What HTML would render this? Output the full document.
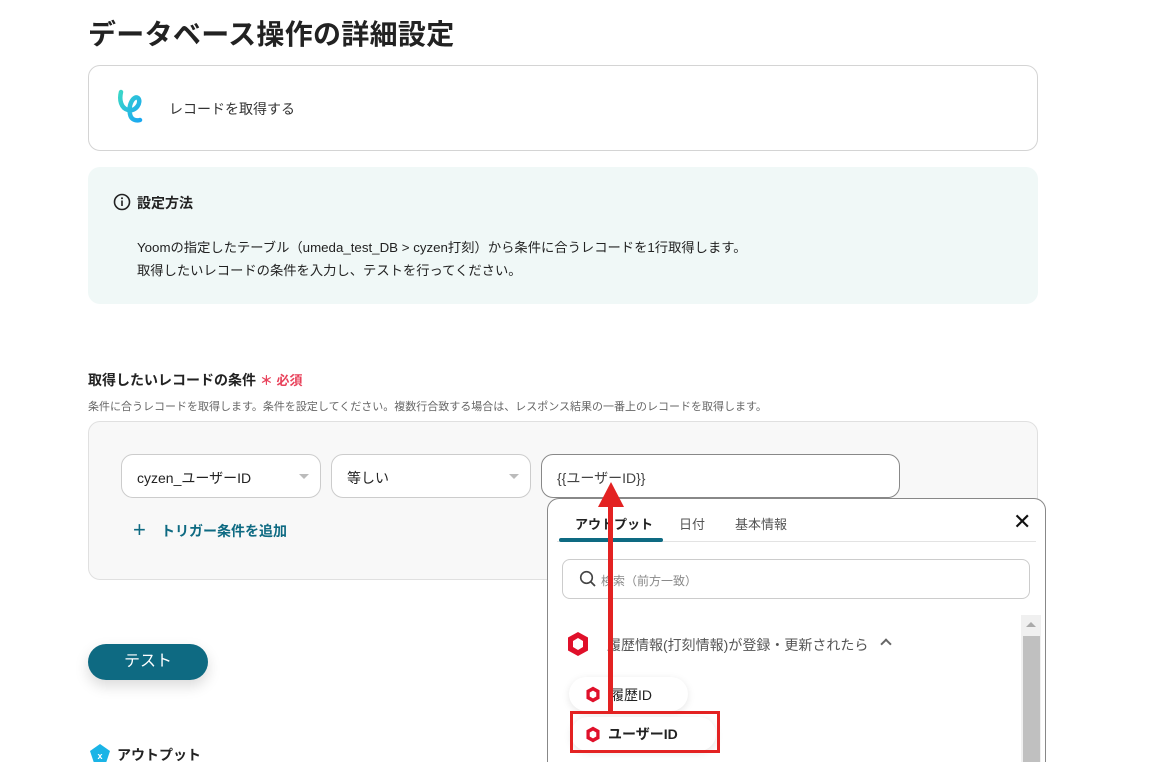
<!DOCTYPE html>
<html><head><meta charset="utf-8"><style>
*{box-sizing:border-box;margin:0;padding:0}
html,body{width:1168px;height:762px;overflow:hidden}
body{background:#fff;font-family:"Liberation Sans","Noto Sans CJK JP",sans-serif;color:#222;position:relative}
.a{position:absolute}
</style></head><body>
<div class="a" style="left:88px;top:13px;font-size:28px;font-weight:bold;color:#222;letter-spacing:0.3px">データベース操作の詳細設定</div>
<div class="a" style="left:88px;top:65px;width:950px;height:86px;border:1px solid #d4d4d4;border-radius:12px"></div>
<svg class="a" style="left:116px;top:88px" width="34" height="40" viewBox="0 0 34 40"><defs><linearGradient id="g" x1="0" y1="0" x2="1" y2="1"><stop offset="0" stop-color="#3ad6c8"/><stop offset="1" stop-color="#1aa8f0"/></linearGradient></defs><path d="M5 4 C3 12 5 20 12 22 C20 24 26 14 22 10 C18 7 12 16 14 26 C15 32 20 33 24 32" fill="none" stroke="url(#g)" stroke-width="4.5" stroke-linecap="round"/></svg>
<div class="a" style="left:169px;top:99px;font-size:14px;color:#333">レコードを取得する</div>
<div class="a" style="left:88px;top:167px;width:950px;height:137px;background:#f0f8f7;border-radius:12px"></div>
<svg class="a" style="left:113px;top:193px" width="18" height="18" viewBox="0 0 18 18"><circle cx="9" cy="9" r="7.5" fill="none" stroke="#222" stroke-width="1.6"/><rect x="8.2" y="7.5" width="1.6" height="5.5" fill="#222"/><circle cx="9" cy="5.3" r="1" fill="#222"/></svg>
<div class="a" style="left:137px;top:193px;font-size:14px;font-weight:bold">設定方法</div>
<div class="a" style="left:137px;top:236px;font-size:13.3px;line-height:23px;color:#222">Yoomの指定したテーブル（umeda_test_DB &gt; cyzen打刻）から条件に合うレコードを1行取得します。<br>取得したいレコードの条件を入力し、テストを行ってください。</div>
<div class="a" style="left:88px;top:370px;font-size:14px;font-weight:bold">取得したいレコードの条件 <span style="color:#e8415a;font-size:13px">＊ 必須</span></div>
<div class="a" style="left:88px;top:398px;font-size:11px;color:#666">条件に合うレコードを取得します。条件を設定してください。複数行合致する場合は、レスポンス結果の一番上のレコードを取得します。</div>
<div class="a" style="left:88px;top:421px;width:950px;height:159px;background:#f8f8f8;border:1px solid #e0e0e0;border-radius:12px"></div>
<div class="a" style="left:121px;top:454px;width:200px;height:44px;background:#fff;border:1px solid #ccc;border-radius:12px;padding:13px 0 0 15px;font-size:14px">cyzen_ユーザーID</div>
<div class="a" style="left:299px;top:474px;border:5px solid transparent;border-top:5px solid #bbb;border-bottom:0"></div>
<div class="a" style="left:331px;top:454px;width:200px;height:44px;background:#fff;border:1px solid #ccc;border-radius:12px;padding:13px 0 0 15px;font-size:14px">等しい</div>
<div class="a" style="left:509px;top:474px;border:5px solid transparent;border-top:5px solid #bbb;border-bottom:0"></div>
<div class="a" style="left:541px;top:454px;width:359px;height:44px;background:#fff;border:1px solid #888;border-radius:12px;padding:13px 0 0 15px;font-size:14px;color:#444">{{ユーザーID}}</div>
<div class="a" style="left:133px;top:517px;font-size:22px;color:#0e6a82">+</div>
<div class="a" style="left:161px;top:521px;font-size:14px;font-weight:bold;color:#0e6a82">トリガー条件を追加</div>
<div class="a" style="left:88px;top:644px;width:120px;height:36px;background:#0e6a82;border-radius:18px;color:#fff;font-size:16px;text-align:center;line-height:36px;box-shadow:0 6px 14px rgba(0,0,0,.15)">テスト</div>
<svg class="a" style="left:90px;top:744px" width="20" height="19" viewBox="0 0 20 19"><path d="M10 0 L20 7 L16 19 L4 19 L0 7Z" fill="#1ab4e6"/><text x="10" y="15" font-size="9" font-weight="bold" fill="#fff" text-anchor="middle" font-family="Liberation Sans">x</text></svg>
<div class="a" style="left:117px;top:745px;font-size:14px;font-weight:bold">アウトプット</div>
<!-- popup -->
<div class="a" style="left:547px;top:498px;width:499px;height:264px;background:#fff;border:1px solid #888;border-bottom:none;border-radius:12px 12px 0 0"></div>
<div class="a" style="left:575px;top:514px;font-size:13px;font-weight:bold">アウトプット</div>
<div class="a" style="left:679px;top:514px;font-size:13px;color:#555">日付</div>
<div class="a" style="left:735px;top:514px;font-size:13px;color:#555">基本情報</div>
<div class="a" style="left:1013px;top:509px;font-size:22px;color:#111">✕</div>
<div class="a" style="left:557px;top:541px;width:479px;height:1px;background:#e3e3e3"></div>
<div class="a" style="left:559px;top:538px;width:104px;height:4px;background:#0e6a82;border-radius:2px"></div>
<div class="a" style="left:562px;top:559px;width:468px;height:40px;border:1px solid #ccc;border-radius:8px"></div>
<svg class="a" style="left:579px;top:570px" width="18" height="18" viewBox="0 0 18 18"><circle cx="7.5" cy="7.5" r="5.8" fill="none" stroke="#444" stroke-width="1.6"/><path d="M12 12 L16 16" stroke="#444" stroke-width="1.8"/></svg>
<div class="a" style="left:601px;top:572px;font-size:12px;color:#888">検索（前方一致）</div>
<div class="a" style="left:1021px;top:615px;width:20px;height:147px;background:#f0f0f0"></div>
<div class="a" style="left:1023px;top:636px;width:17px;height:126px;background:#c0c0c0"></div>
<div class="a" style="left:1026px;top:622px;border:5px solid transparent;border-bottom:5px solid #aaa;border-top:0"></div>
<svg class="a" style="left:566px;top:631px" width="24" height="26" viewBox="0 0 24 26"><path d="M12 1 L22 6.5 L22 19.5 L12 25 L2 19.5 L2 6.5Z" fill="#e0102a"/><path d="M12 7 L17 10 L17 16 L12 19 L7 16 L7 10Z" fill="#fff"/></svg>
<div class="a" style="left:607px;top:635px;font-size:14px;color:#555">履歴情報(打刻情報)が登録・更新されたら</div>
<div class="a" style="left:882px;top:640px;width:8px;height:8px;border-left:2px solid #666;border-top:2px solid #666;transform:rotate(45deg)"></div>
<div class="a" style="left:569px;top:677px;width:119px;height:34px;background:#fff;border-radius:17px;box-shadow:0 2px 8px rgba(0,0,0,.1)"></div>
<div class="a" style="left:571px;top:717px;width:145px;height:34px;background:#fff;border-radius:17px;box-shadow:0 2px 8px rgba(0,0,0,.1)"></div>
<svg class="a" style="left:585px;top:686px" width="16" height="17" viewBox="0 0 24 26"><path d="M12 1 L22 6.5 L22 19.5 L12 25 L2 19.5 L2 6.5Z" fill="#e0102a"/><path d="M12 7 L17 10 L17 16 L12 19 L7 16 L7 10Z" fill="#fff"/></svg>
<div class="a" style="left:610px;top:685px;font-size:14px">履歴ID</div>
<svg class="a" style="left:585px;top:726px" width="16" height="17" viewBox="0 0 24 26"><path d="M12 1 L22 6.5 L22 19.5 L12 25 L2 19.5 L2 6.5Z" fill="#e0102a"/><path d="M12 7 L17 10 L17 16 L12 19 L7 16 L7 10Z" fill="#fff"/></svg>
<div class="a" style="left:608px;top:724px;font-size:14px;font-weight:bold">ユーザーID</div>
<div class="a" style="left:570px;top:711px;width:150px;height:42px;border:3.5px solid #e32222"></div>
<div class="a" style="left:608px;top:500px;width:5px;height:212px;background:#e32222"></div>
<div class="a" style="left:598px;top:482px;border-left:13px solid transparent;border-right:13px solid transparent;border-bottom:25px solid #e32222;border-top:0;width:0;height:0"></div>
</body></html>
